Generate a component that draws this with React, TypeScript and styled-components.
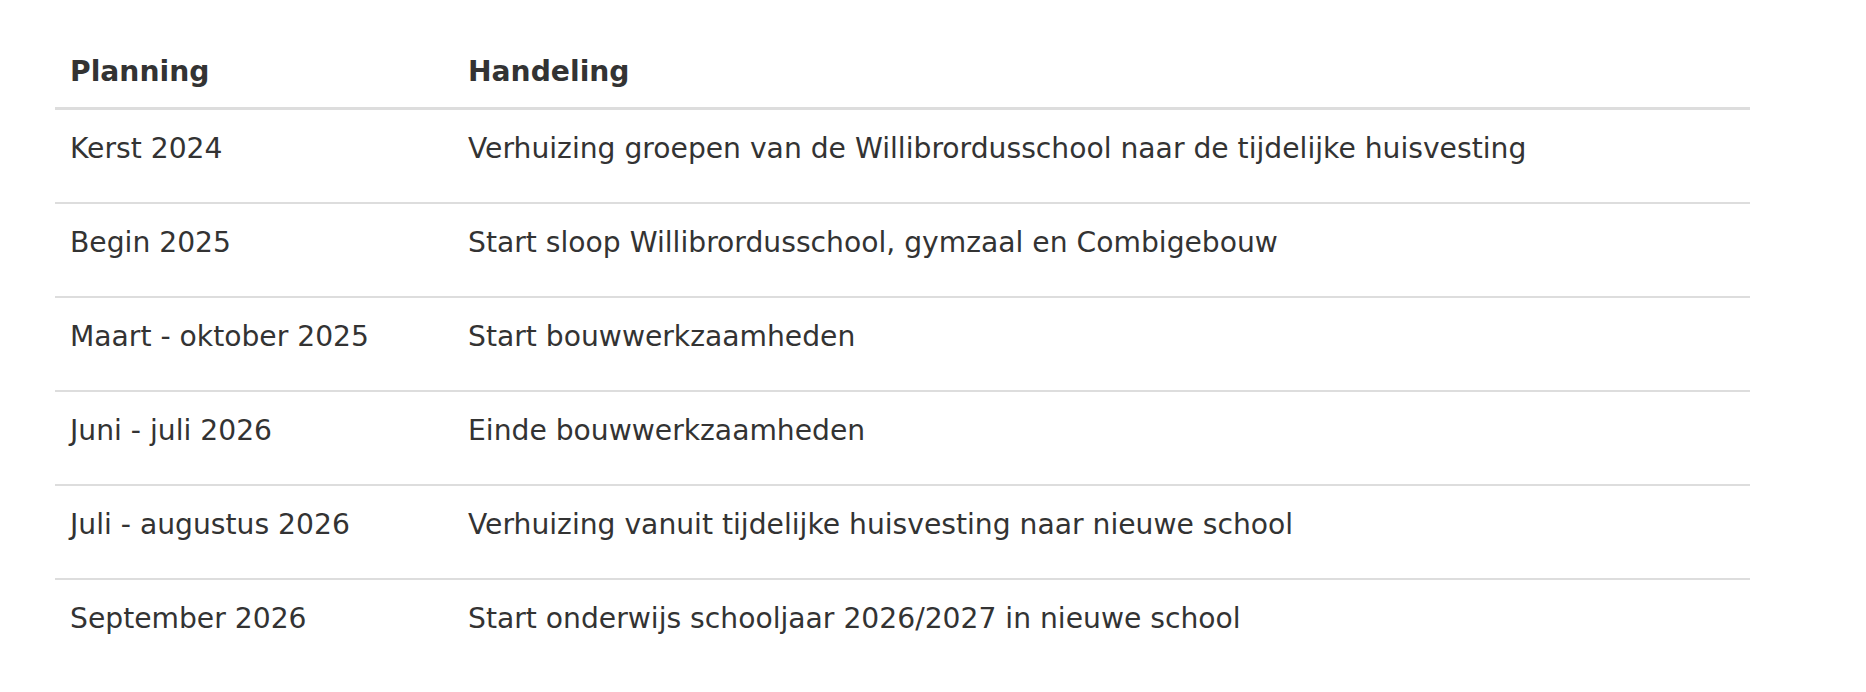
import React from 'react'
import styled, { createGlobalStyle } from 'styled-components'

const GlobalStyle = createGlobalStyle`
    body {
        margin: 0;
        background: #ffffff;
        font-family: Verdana, "DejaVu Sans", sans-serif;
        color: #333333;
    }
`

const Page = styled.div`
    padding: 34px 116px 0 55px;
`

const Table = styled.table`
    width: 100%;
    border-collapse: separate;
    border-spacing: 0;
    font-size: 28.2px;
    line-height: 32px;
    text-align: left;
`

const HeadCell = styled.th`
    padding: 22px 15px 19px;
    font-weight: bold;
    border-bottom: 3px solid #dddddd;
    width: ${(props) => props.$width || 'auto'};
    box-sizing: border-box;
`

const Cell = styled.td`
    padding: 23px 15px 37px;
    vertical-align: top;
    font-weight: normal;
`

const Row = styled.tr`
    & + & > td {
        border-top: 2px solid #dddddd;
    }
`

const planning = [
    ['Kerst 2024', 'Verhuizing groepen van de Willibrordusschool naar de tijdelijke huisvesting'],
    ['Begin 2025', 'Start sloop Willibrordusschool, gymzaal en Combigebouw'],
    ['Maart - oktober 2025', 'Start bouwwerkzaamheden'],
    ['Juni - juli 2026', 'Einde bouwwerkzaamheden'],
    ['Juli - augustus 2026', 'Verhuizing vanuit tijdelijke huisvesting naar nieuwe school'],
    ['September 2026', 'Start onderwijs schooljaar 2026/2027 in nieuwe school'],
]

const App = () => {
    return (
        <>
            <GlobalStyle />
            <Page>
                <Table>
                    <thead>
                        <tr>
                            <HeadCell $width="398px">Planning</HeadCell>
                            <HeadCell>Handeling</HeadCell>
                        </tr>
                    </thead>
                    <tbody>
                        {planning.map(([when, what]) => (
                            <Row key={when}>
                                <Cell>{when}</Cell>
                                <Cell>{what}</Cell>
                            </Row>
                        ))}
                    </tbody>
                </Table>
            </Page>
        </>
    )
}

export default App
